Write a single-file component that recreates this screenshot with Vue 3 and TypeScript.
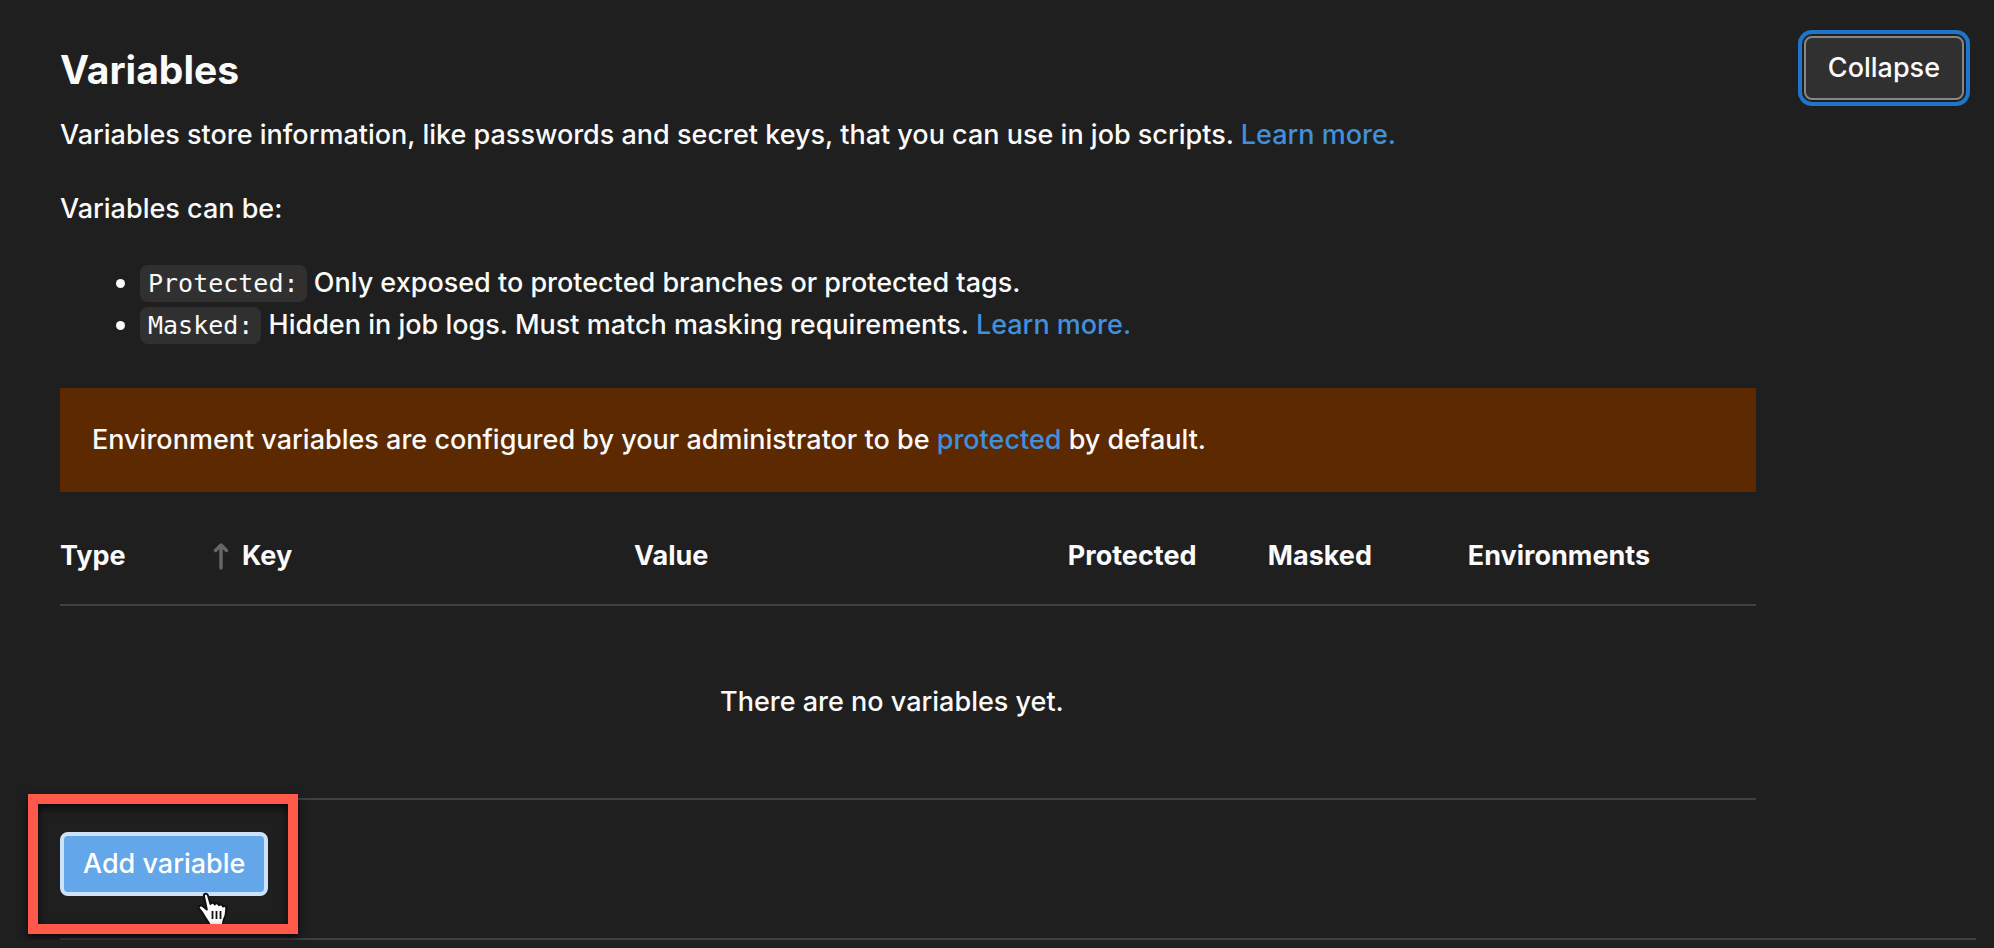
<script setup lang="ts">
import { ref } from 'vue'

interface Column {
  key: string
  label: string
  sorted?: boolean
}

const columns: Column[] = [
  { key: 'type', label: 'Type' },
  { key: 'key', label: 'Key', sorted: true },
  { key: 'value', label: 'Value' },
  { key: 'protected', label: 'Protected' },
  { key: 'masked', label: 'Masked' },
  { key: 'environments', label: 'Environments' },
]

const expanded = ref(true)
</script>

<template>
  <main class="page">
    <section class="settings">
      <div class="content">
        <h2 class="title">Variables</h2>
        <p class="text">
          Variables store information, like passwords and secret keys, that you can use in job scripts.
          <a href="#variables">Learn more.</a>
        </p>
        <template v-if="expanded">
          <p class="text">Variables can be:</p>
          <ul class="kinds">
            <li><code>Protected:</code> Only exposed to protected branches or protected tags.</li>
            <li>
              <code>Masked:</code> Hidden in job logs. Must match masking requirements.
              <a href="#masking">Learn more.</a>
            </li>
          </ul>
          <p class="notice">
            Environment variables are configured by your administrator to be
            <a href="#protected">protected</a> by default.
          </p>
          <table class="table">
            <colgroup>
              <col v-for="c in columns" :key="c.key" :class="'col-' + c.key" />
            </colgroup>
            <thead>
              <tr>
                <th v-for="c in columns" :key="c.key" scope="col">
                  <span class="head">
                    <svg v-if="c.sorted" class="sort" viewBox="0 0 22 32" aria-hidden="true">
                      <path d="M11 28V5M5.500 10.500L11 5l5.500 5.500" />
                    </svg>
                    {{ c.label }}
                  </span>
                </th>
              </tr>
            </thead>
            <tbody>
              <tr>
                <td :colspan="columns.length">There are no variables yet.</td>
              </tr>
            </tbody>
          </table>
          <div class="action">
            <button type="button" class="add">Add variable</button>
            <svg class="pointer" viewBox="0 0 36 40" aria-hidden="true">
              <path
                class="hand"
                d="M8 6.500C7.300 3.500 11 2.500 12 5.500L14.500 14C15 12.300 18.200 12.300 18.700 14.500C19.500 12.800 22.500 13 23 15.200C24 13.800 26.600 14.300 27 16.500C28 15.400 30.300 16 30.300 18.500C30.300 24 29.500 27 27.500 30.500L26.500 37H14.500C13.500 32.500 10 29.500 8 25.500C6.500 22.300 5 21 3.300 19C1.500 16.500 4 14.500 6.500 16L10.800 19.500Z"
              />
              <path class="creases" d="M16.500 21v8M20.500 21v8M24.500 21v8" />
            </svg>
            <span class="highlight"></span>
          </div>
        </template>
      </div>
      <button type="button" class="toggle" :aria-expanded="expanded" @click="expanded = !expanded">
        {{ expanded ? 'Collapse' : 'Expand' }}
      </button>
    </section>
  </main>
</template>

<style>
body {
  margin: 0;
  background: #1f1f1f;
}
</style>

<style scoped>
.page {
  padding: 36px 18px 0 60px;
  color: #fafafa;
  font-family: Inter, "Liberation Sans", sans-serif;
  font-size: 27px;
  font-weight: 450;
  line-height: 42px;
}

.settings {
  display: flex;
  align-items: flex-start;
  gap: 48px;
  padding: 0 12px 42px 0;
  border-bottom: 2px solid #404040;
}

.content {
  flex: 1;
  min-width: 0;
  padding-top: 10px;
}

.title {
  margin: 0 0 20px;
  font-size: 39px;
  line-height: 48px;
  font-weight: 700;
}

.text {
  margin: 0 0 32px;
}

a {
  color: #428fdc;
  text-decoration: none;
}

.kinds {
  margin: 0 0 42px;
  padding-left: 80px;
}

code {
  padding: 4px 8px;
  border-radius: 8px;
  background: #303030;
  font-family: "DejaVu Sans Mono", monospace;
  font-size: 25px;
  line-height: 29px;
}

.notice {
  margin: 0 0 16px;
  padding: 31px 32px;
  background: #5c2900;
}

.table {
  width: 100%;
  table-layout: fixed;
  border-collapse: separate;
  border-spacing: 0;
}

.col-type {
  width: 150px;
}

.col-key {
  width: 25%;
}

.col-protected,
.col-masked {
  width: 200px;
}

.col-environments {
  width: 288px;
}

th {
  padding: 27px 0;
  border-bottom: 2px solid #404040;
  font-weight: 700;
  text-align: left;
}

.head {
  display: flex;
  align-items: center;
  gap: 10px;
}

.sort {
  width: 22px;
  height: 32px;
  fill: none;
  stroke: #666666;
  stroke-width: 3.500;
  stroke-linecap: round;
  stroke-linejoin: round;
}

td {
  padding: 75px 32px 75px 0;
  border-bottom: 2px solid #404040;
  text-align: center;
}

.action {
  position: relative;
  width: fit-content;
  margin-top: 32px;
}

button {
  display: block;
  height: 64px;
  font: inherit;
  cursor: pointer;
}

.add {
  padding: 0 19px;
  border: 4px solid #cbe2f9;
  border-radius: 8px;
  background: #63a6e9;
  color: #ffffff;
}

.toggle {
  flex: none;
  padding: 0 22px;
  border: 2px solid #868686;
  border-radius: 8px;
  background: #303030;
  color: #fafafa;
  box-shadow: 0 0 0 2px #1f1f1f, 0 0 0 6px #1f75cb;
}

.pointer {
  position: absolute;
  right: 36px;
  bottom: -34px;
  width: 36px;
  height: 40px;
}

.hand {
  fill: #ffffff;
  stroke: #111111;
  stroke-width: 2;
  stroke-linejoin: round;
}

.creases {
  fill: none;
  stroke: #111111;
  stroke-width: 1.800;
}

.highlight {
  position: absolute;
  inset: -38px -30px -38px -32px;
  border: 10px solid #ff594c;
  box-shadow: 0 4px 8px rgba(0, 0, 0, 0.7), inset 0 4px 8px rgba(0, 0, 0, 0.7);
  pointer-events: none;
}
</style>
